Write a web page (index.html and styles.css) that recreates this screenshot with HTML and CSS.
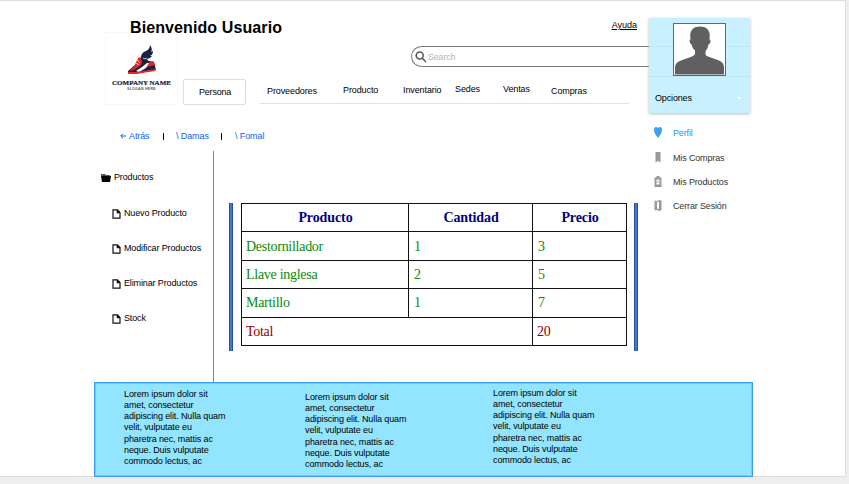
FILE: index.html
```html
<!DOCTYPE html>
<html lang="es">
<head>
<meta charset="utf-8">
<title>Productos</title>
<link rel="stylesheet" href="styles.css">
</head>
<body>
<div class="page">
  <div class="upper">
    <div class="main">
      <header>
        <div class="top-row"><h1>Bienvenido Usuario</h1><a class="help">Ayuda</a></div>
        <div class="brand-row">
          <div class="logo">
            <svg class="shoe" viewBox="0 0 30 30">
              <path d="M1 26L8 20L12 13L22 16L27 17L29 25L22 26L8 29L1 28Z" fill="#17233f"/>
              <path d="M9 17L12 12L16 14L14 20L7 25L2 26L8 21Z" fill="#e8232c"/>
              <path d="M21 18L26 16L28 20L20 22Z" fill="#e8232c"/>
              <path d="M9 26L15 22L20 18L22 18L19 23L12 27Z" fill="#fff"/>
              <path d="M1 27L10 27L28 24L28 26L9 29H1Z" fill="#e8232c"/>
              <path d="M14 15Q13 8 19 6Q23 4 23 0Q26 4 24 7L26 6Q26 10 23 11L25 11Q23 14 20 14L21 16Q17 18 14 15Z" fill="#17233f"/>
              <path d="M16 13Q18 15 20 13" stroke="#fff" stroke-width=".7" fill="none"/>
              <path d="M10 15L13 18M9 18L12 20" stroke="#fff" stroke-width=".7"/>
            </svg>
            <div class="company">COMPANY NAME</div>
            <div class="slogan">SLOGAN HERE</div>
          </div>
          <div class="tools">
            <div class="search">
              <svg viewBox="0 0 12 12"><circle cx="4.700" cy="4.600" r="3.500"/><path d="M7.300 7.300L11 11"/></svg>
              <span>Search</span>
            </div>
            <nav>
              <a class="tab">Persona</a>
              <div class="links">
                <a class="low">Proveedores</a><a class="mid">Producto</a><a class="mid">Inventario</a><a>Sedes</a><a>Ventas</a><a class="low">Compras</a>
              </div>
            </nav>
          </div>
        </div>
      </header>
      <div class="crumbs"><svg viewBox="0 0 6 6"><path d="M6 3H1M3 .7L.7 3L3 5.300"/></svg><a class="back">Atrás</a><b></b><a class="women">\ Damas</a><b></b><a class="formal">\ Fomal</a></div>
      <div class="content">
        <aside>
          <div class="folder"><svg viewBox="0 0 10 8"><path d="M0 0H4L5 1H9V2H0Z" fill="#555"/><path d="M0 2H10L9 8H1Z"/></svg>Productos</div>
          <div class="entry"><svg viewBox="0 0 9 10"><path d="M1 .8H5.500L8 3.500V9.200H1ZM5.300 1V3.700H8"/></svg>Nuevo Producto</div>
          <div class="entry"><svg viewBox="0 0 9 10"><path d="M1 .8H5.500L8 3.500V9.200H1ZM5.300 1V3.700H8"/></svg>Modificar Productos</div>
          <div class="entry"><svg viewBox="0 0 9 10"><path d="M1 .8H5.500L8 3.500V9.200H1ZM5.300 1V3.700H8"/></svg>Eliminar Productos</div>
          <div class="entry"><svg viewBox="0 0 9 10"><path d="M1 .8H5.500L8 3.500V9.200H1ZM5.300 1V3.700H8"/></svg>Stock</div>
        </aside>
        <div class="table-frame">
          <table>
            <colgroup><col class="c1"><col class="c2"><col class="c3"></colgroup>
            <tr><th>Producto</th><th>Cantidad</th><th>Precio</th></tr>
            <tr><td>Destornillador</td><td>1</td><td>3</td></tr>
            <tr><td>Llave inglesa</td><td>2</td><td>5</td></tr>
            <tr><td>Martillo</td><td>1</td><td>7</td></tr>
            <tr class="total"><td colspan="2">Total</td><td>20</td></tr>
          </table>
        </div>
      </div>
    </div>
    <div class="account">
      <div class="card">
        <div class="strip"></div><div class="strip"></div>
        <div class="options"><span>Opciones</span><i></i></div>
        <div class="avatar"><svg viewBox="0 0 51 50"><path d="M1 50V43Q1 38 7 36L18 32Q21 31 21 29V26Q18 23 17.500 20Q15.500 19 15.500 16Q15.500 15 16.500 15C15 6 19 2 26 2S37 6 35.500 15Q36.500 15 36.500 17Q36.500 19 34.500 20Q34 24 31.500 27V30Q31.500 31 34 32L45 36Q50 38 50 43V50Z"/></svg></div>
      </div>
      <div class="menu">
        <a class="active"><svg viewBox="0 0 8 11"><path d="M4 11C2 8 0 6 0 3Q0 0 2 0Q3.500 0 4 1.300Q4.500 0 6 0Q8 0 8 3C8 6 6 8 4 11Z"/></svg>Perfil</a>
        <a><svg viewBox="0 0 8 11"><path d="M1.500 0H6.500V10.500L4 9L1.500 10.500Z"/></svg>Mis Compras</a>
        <a><svg viewBox="0 0 8 11"><path d="M.5 1.500H2.500V0H5.500V1.500H7.500V11H.5Z"/><path class="cut" d="M2.500 4L3.500 3.500H5.500V8.500H2.500ZM3.500 1H4.500"/><path d="M3.500 5H4.500V7H3.500Z"/></svg>Mis Productos</a>
        <a><svg viewBox="0 0 8 11"><path d="M.5 .5L2.500 1L5.500 0L7.500 .5V10L5.500 11L2.500 10L.5 10.500Z"/><path class="cut" d="M3 2L5 1.500V9L3 8.500Z"/></svg>Cerrar Sesión</a>
      </div>
    </div>
  </div>
  <footer>
    <p class="f1">Lorem ipsum dolor sit<br>amet, consectetur<br>adipiscing elit. Nulla quam<br>velit, vulputate eu<br>pharetra nec, mattis ac<br>neque. Duis vulputate<br>commodo lectus, ac</p>
    <p class="f2">Lorem ipsum dolor sit<br>amet, consectetur<br>adipiscing elit. Nulla quam<br>velit, vulputate eu<br>pharetra nec, mattis ac<br>neque. Duis vulputate<br>commodo lectus, ac</p>
    <p class="f3">Lorem ipsum dolor sit<br>amet, consectetur<br>adipiscing elit. Nulla quam<br>velit, vulputate eu<br>pharetra nec, mattis ac<br>neque. Duis vulputate<br>commodo lectus, ac</p>
  </footer>
</div>
</body>
</html>
```
FILE: styles.css
```css
* { box-sizing: border-box; }
body { margin: 0; height: 484px; overflow: hidden; background: #eee; color: #000; font: 9px/11px "Liberation Sans", Arial, sans-serif; }
svg { display: block; flex: none; }
h1, p { margin: 0; }
.page { width: 846px; height: 477px; background: #fff; border: 1px solid #ddd; border-left: 0; padding-left: 94px; }
.upper { display: flex; height: 381px; }
.main { width: 555px; }
.top-row { display: flex; justify-content: space-between; height: 31px; padding: 17px 12px 0 36px; }
h1 { font-size: 16px; line-height: 19px; letter-spacing: .1px; position: relative; z-index: 1; }
.help { margin-top: 2px; text-decoration: underline; }
.brand-row { display: flex; padding-left: 11px; }
.logo { width: 73px; height: 73px; border: 1px solid #f8f8f8; padding-top: 12px; display: flex; flex-direction: column; align-items: center; }
.shoe { width: 30px; height: 30px; }
.company { margin-top: 4px; font: bold 7px/8px "Liberation Serif", serif; color: #17233f; white-space: nowrap; -webkit-text-stroke: .2px #17233f; }
.slogan { font: bold 3.500px/5px "Liberation Sans", sans-serif; letter-spacing: .3px; color: #555; }
.tools { flex: 1; padding-left: 5px; }
.search { display: flex; align-items: center; width: 238px; height: 21px; margin: 14px 0 12px auto; padding-left: 3px; border: 1px solid #777; border-right: 0; border-radius: 11px 0 0 11px; color: #b5b5b5; letter-spacing: -.2px; }
.search svg { width: 12px; height: 12px; margin-right: 1px; fill: none; stroke: #555; stroke-width: 1.500; }
.search span { margin-top: 2px; }
nav { display: flex; }
.tab { width: 63px; height: 26px; border: 1px solid #ddd; border-radius: 2px; padding: 7px 0 0 15px; letter-spacing: -.2px; }
.links { display: grid; grid-template-columns: 76px 60px 52px 48px 48px 1fr; width: 369px; height: 25px; margin-left: 14px; padding: 5px 0 0 7px; border-bottom: 1px solid #e2e2e2; letter-spacing: -.1px; }
.low { padding-top: 2px; }
.mid { padding-top: 1px; }
.crumbs { display: flex; height: 11px; margin-top: 26px; padding-left: 26px; color: #0b5fff; letter-spacing: -.1px; }
.crumbs svg { width: 6px; height: 6px; margin: 2px 3px 0 0; fill: none; stroke: #0b5fff; }
.crumbs b { width: 1px; height: 7px; margin-top: 2px; background: #000; }
.back { width: 34px; }
.women { width: 45px; padding-left: 12px; box-sizing: content-box; }
.formal { padding-left: 13px; }
.content { display: flex; height: 231px; margin-top: 9px; }
aside { width: 120px; border-right: 1px solid #888; padding: 21px 0 0 7px; white-space: nowrap; letter-spacing: -.13px; }
.folder, .entry { display: flex; align-items: center; height: 11px; }
.folder svg { width: 10px; height: 8px; margin-right: 3px; }
.entry { margin-top: 24px; padding-left: 11px; }
.folder + .entry { margin-top: 25px; }
.entry svg { width: 9px; height: 10px; margin-right: 3px; fill: none; stroke: #111; stroke-width: 1.200; }
.table-frame { width: 409px; height: 148px; margin: 52px 0 0 15px; padding-left: 8px; border: solid #3b6fc4; border-width: 0 4px; border-style: double; border-color: #234f9c; background: linear-gradient(#fff, #fff) padding-box, #4477cd border-box; }
table { width: 385px; table-layout: fixed; border-collapse: collapse; font: 14px/16px "Liberation Serif", serif; letter-spacing: -.28px; color: #0a8a0a; }
.c1 { width: 167px; }
.c2 { width: 124px; }
.c3 { width: 94px; }
tr { height: 28.400px; }
td, th { border: 1px solid #111; padding: 1px 4px 0; }
td:not(:first-child), th { padding-left: 5px; }
th { color: #000080; letter-spacing: -.1px; }
.total td:last-child { padding-left: 4px; }
.total { color: #900000; }
.account { width: 101px; padding-top: 17px; }
.card { position: relative; height: 95px; background: #c8f0ff; box-shadow: 0 1px 3px #bbb; }
.strip { height: 29px; border-bottom: 1px solid #bee6f2; }
.strip + .strip { height: 30px; }
.options { display: flex; justify-content: space-between; align-items: center; height: 36px; padding: 7px 9px 0 6px; letter-spacing: -.15px; }
.options i { border: 2px solid transparent; border-top: 3px solid #fff; border-bottom: 0; }
.avatar { position: absolute; left: 24px; top: 5px; width: 53px; height: 53px; border: 1px solid #666; background: #fff; }
.avatar svg { width: 51px; height: 51px; fill: #606060; }
.menu { padding-top: 14px; color: #333; letter-spacing: -.15px; }
.menu a { display: flex; align-items: center; height: 24.300px; padding-left: 5px; white-space: nowrap; }
.menu a:first-child { height: 13px; margin-bottom: 6px; }
.menu svg { width: 8px; height: 11px; margin: -2px 11px 0 0; fill: #999; }
.menu .active { color: #2196f3; }
.menu .active svg { fill: #3ba3f5; }
.menu .cut { fill: #fff; }
footer { display: flex; width: 659px; height: 95px; background: #93e4fe; border: 1px solid #3c9bf0; box-shadow: inset 0 0 0 1px #77c9fb; padding-left: 29px; line-height: 11.150px; white-space: nowrap; letter-spacing: -.12px; }
.f1 { width: 181px; padding-top: 6px; }
.f2 { width: 188px; padding-top: 9px; }
.f3 { padding-top: 5px; }
```
